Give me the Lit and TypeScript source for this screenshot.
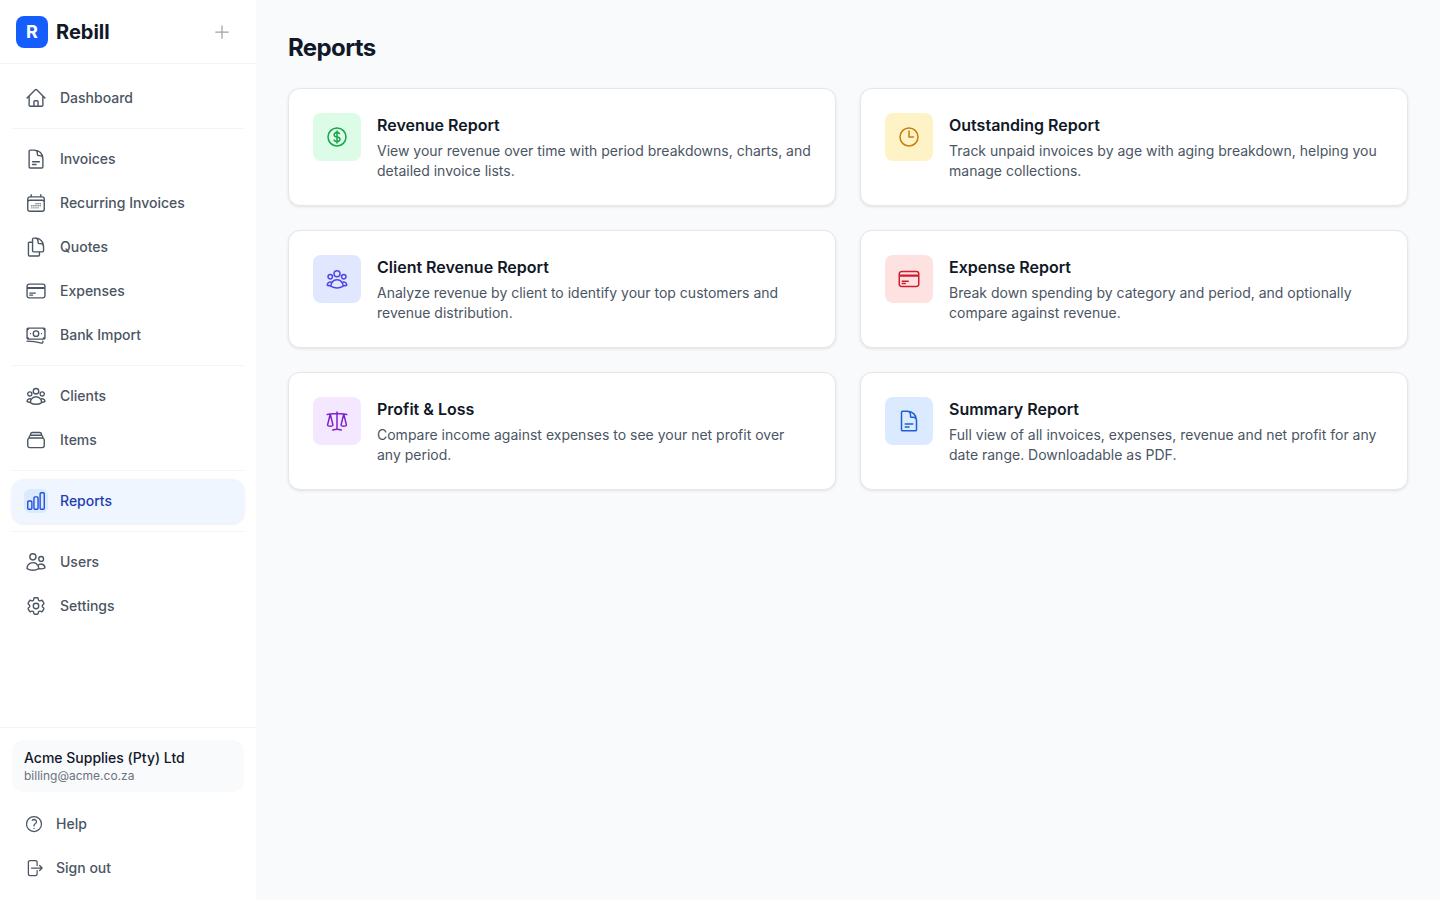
import { LitElement, html, css, svg } from 'lit';
import { customElement } from 'lit/decorators.js';

const ICONS: Record<string, string> = {
  home: 'M2.25 12l8.954-8.955c.44-.439 1.152-.439 1.591 0L21.75 12M4.5 9.75v10.125c0 .621.504 1.125 1.125 1.125H9.75v-4.875c0-.621.504-1.125 1.125-1.125h2.25c.621 0 1.125.504 1.125 1.125V21h4.125c.621 0 1.125-.504 1.125-1.125V9.75M8.25 21h8.25',
  doc: 'M19.5 14.25v-2.625a3.375 3.375 0 00-3.375-3.375h-1.5A1.125 1.125 0 0113.5 7.125v-1.5a3.375 3.375 0 00-3.375-3.375H8.25m0 12.75h7.5m-7.5 3H12M10.5 2.25H5.625c-.621 0-1.125.504-1.125 1.125v17.25c0 .621.504 1.125 1.125 1.125h12.75c.621 0 1.125-.504 1.125-1.125V11.25a9 9 0 00-9-9z',
  calendar: 'M6.75 3v2.25M17.25 3v2.25M3 18.75V7.5a2.25 2.25 0 012.25-2.25h13.5A2.25 2.25 0 0121 7.5v11.25m-18 0A2.25 2.25 0 005.25 21h13.5A2.25 2.25 0 0021 18.75m-18 0v-7.5A2.25 2.25 0 015.25 9h13.5A2.25 2.25 0 0121 11.25v7.5m-9-6h.008v.008H12v-.008zM12 15h.008v.008H12V15zm0 2.25h.008v.008H12v-.008zM9.75 15h.008v.008H9.75V15zm0 2.25h.008v.008H9.75v-.008zM7.5 15h.008v.008H7.5V15zm0 2.25h.008v.008H7.5v-.008zm6.75-4.5h.008v.008h-.008v-.008zm0 2.25h.008v.008h-.008V15zm0 2.25h.008v.008h-.008v-.008zm2.25-4.5h.008v.008H16.5v-.008zm0 2.25h.008v.008H16.5V15z',
  copies: 'M15.75 17.25v3.375c0 .621-.504 1.125-1.125 1.125h-9.75a1.125 1.125 0 01-1.125-1.125V7.875c0-.621.504-1.125 1.125-1.125H6.75a9.06 9.06 0 011.5.124m7.5 10.376h3.375c.621 0 1.125-.504 1.125-1.125V11.25c0-4.46-3.243-8.161-7.5-8.876a9.06 9.06 0 00-1.5-.124H9.375c-.621 0-1.125.504-1.125 1.125v3.5m7.5 10.375H9.375a1.125 1.125 0 01-1.125-1.125v-9.25m12 6.625v-1.875a3.375 3.375 0 00-3.375-3.375h-1.5a1.125 1.125 0 01-1.125-1.125v-1.5a3.375 3.375 0 00-3.375-3.375H9.75',
  card: 'M2.25 8.25h19.5M2.25 9h19.5m-16.5 5.25h6m-6 2.25h3m-3.75 3h15a2.25 2.25 0 002.25-2.25V6.75A2.25 2.25 0 0019.5 4.5h-15a2.25 2.25 0 00-2.25 2.25v10.5A2.25 2.25 0 004.5 19.5z',
  notes: 'M2.25 18.75a60.07 60.07 0 0115.797 2.101c.727.198 1.453-.342 1.453-1.096V18.75M3.75 4.5v.75A.75.75 0 013 6h-.75m0 0v-.375c0-.621.504-1.125 1.125-1.125H20.25M2.25 6v9m18-10.5v.75c0 .414.336.75.75.75h.75m-1.5-1.5h.375c.621 0 1.125.504 1.125 1.125v9.75c0 .621-.504 1.125-1.125 1.125h-.375m1.5-1.5H21a.75.75 0 00-.75.75v.75m0 0H3.75m0 0h-.375a1.125 1.125 0 01-1.125-1.125V15m1.5 1.5v-.75A.75.75 0 003 15h-.75M15 10.5a3 3 0 11-6 0 3 3 0 016 0zm3 0h.008v.008H18V10.5zm-12 0h.008v.008H6V10.5z',
  group: 'M18 18.72a9.094 9.094 0 003.741-.479 3 3 0 00-4.682-2.72m.94 3.198l.001.031c0 .225-.012.447-.037.666A11.944 11.944 0 0112 21c-2.17 0-4.207-.576-5.963-1.584A6.062 6.062 0 016 18.719m12 0a5.971 5.971 0 00-.941-3.197m0 0A5.995 5.995 0 0012 12.75a5.995 5.995 0 00-5.058 2.772m0 0a3 3 0 00-4.681 2.72 8.986 8.986 0 003.74.477m.94-3.197a5.971 5.971 0 00-.94 3.197M15 6.75a3 3 0 11-6 0 3 3 0 016 0zm6 3a2.25 2.25 0 11-4.5 0 2.25 2.25 0 014.5 0zm-13.5 0a2.25 2.25 0 11-4.5 0 2.25 2.25 0 014.5 0z',
  stack: 'M6 6.878V6a2.25 2.25 0 012.25-2.25h7.5A2.25 2.25 0 0118 6v.878m-12 0c.235-.083.487-.128.75-.128h10.5c.263 0 .515.045.75.128m-12 0A2.25 2.25 0 004.5 9v.878m13.5-3A2.25 2.25 0 0119.5 9v.878m0 0a2.246 2.246 0 00-.75-.128H5.25c-.263 0-.515.045-.75.128m15 0A2.25 2.25 0 0121 12v6a2.25 2.25 0 01-2.25 2.25H5.25A2.25 2.25 0 013 18v-6c0-.98.626-1.813 1.5-2.122',
  chart: 'M3 13.125C3 12.504 3.504 12 4.125 12h2.25c.621 0 1.125.504 1.125 1.125v6.75C7.5 20.496 6.996 21 6.375 21h-2.25A1.125 1.125 0 013 19.875v-6.75zM9.75 8.625c0-.621.504-1.125 1.125-1.125h2.25c.621 0 1.125.504 1.125 1.125v11.25c0 .621-.504 1.125-1.125 1.125h-2.25a1.125 1.125 0 01-1.125-1.125V8.625zM16.5 4.125c0-.621.504-1.125 1.125-1.125h2.25C20.496 3 21 3.504 21 4.125v15.75c0 .621-.504 1.125-1.125 1.125h-2.25a1.125 1.125 0 01-1.125-1.125V4.125z',
  users: 'M15 19.128a9.38 9.38 0 002.625.372 9.337 9.337 0 004.121-.952 4.125 4.125 0 00-7.533-2.493M15 19.128v-.003c0-1.113-.285-2.16-.786-3.07M15 19.128v.106A12.318 12.318 0 018.624 21c-2.331 0-4.512-.645-6.374-1.766l-.001-.109a6.375 6.375 0 0111.964-3.07M12 6.375a3.375 3.375 0 11-6.75 0 3.375 3.375 0 016.75 0zm8.25 2.25a2.625 2.625 0 11-5.25 0 2.625 2.625 0 015.25 0z',
  cog: 'M9.594 3.94c.09-.542.56-.94 1.11-.94h2.593c.55 0 1.02.398 1.11.94l.213 1.281c.063.374.313.686.645.87.074.04.147.083.22.127.324.196.72.257 1.075.124l1.217-.456a1.125 1.125 0 011.37.49l1.296 2.247a1.125 1.125 0 01-.26 1.431l-1.003.827c-.293.24-.438.613-.431.992a6.759 6.759 0 010 .255c-.007.378.138.75.43.99l1.005.828c.424.35.534.954.26 1.43l-1.298 2.247a1.125 1.125 0 01-1.369.491l-1.217-.456c-.355-.133-.75-.072-1.076.124a6.57 6.57 0 01-.22.128c-.331.183-.581.495-.644.869l-.213 1.28c-.09.543-.56.941-1.11.941h-2.594c-.55 0-1.02-.398-1.11-.94l-.213-1.281c-.062-.374-.312-.686-.644-.87a6.52 6.52 0 01-.22-.127c-.325-.196-.72-.257-1.076-.124l-1.217.456a1.125 1.125 0 01-1.369-.49l-1.297-2.247a1.125 1.125 0 01.26-1.431l1.004-.827c.292-.24.437-.613.43-.992a6.932 6.932 0 010-.255c.007-.378-.138-.75-.43-.99l-1.004-.828a1.125 1.125 0 01-.26-1.43l1.297-2.247a1.125 1.125 0 011.37-.491l1.216.456c.356.133.751.072 1.076-.124.072-.044.146-.087.22-.128.332-.183.582-.495.644-.869l.214-1.281zM15 12a3 3 0 11-6 0 3 3 0 016 0z',
  help: 'M9.879 7.519c1.171-1.025 3.071-1.025 4.242 0 1.172 1.025 1.172 2.687 0 3.712-.203.179-.43.326-.67.442-.745.361-1.45.999-1.45 1.827v.75M21 12a9 9 0 11-18 0 9 9 0 0118 0zm-9 5.25h.008v.008H12v-.008z',
  signout: 'M15.75 9V5.25A2.25 2.25 0 0013.5 3h-6a2.25 2.25 0 00-2.25 2.25v13.5A2.25 2.25 0 007.5 21h6a2.25 2.25 0 002.25-2.25V15m3 0l3-3m0 0l-3-3m3 3H9',
  dollar: 'M12 6v12m-3-2.818l.879.659c1.171.879 3.07.879 4.242 0 1.172-.879 1.172-2.303 0-3.182C13.536 12.219 12.768 12 12 12c-.725 0-1.45-.22-2.003-.659-1.106-.879-1.106-2.303 0-3.182s2.9-.879 4.006 0l.415.33M21 12a9 9 0 11-18 0 9 9 0 0118 0z',
  clock: 'M12 6v6h4.5m4.5 0a9 9 0 11-18 0 9 9 0 0118 0z',
  scale: 'M12 3v17.25m0 0c-1.472 0-2.882.265-4.185.75M12 20.25c1.472 0 2.882.265 4.185.75M18.75 4.97A48.416 48.416 0 0012 4.5c-2.291 0-4.545.16-6.75.47m13.5 0c1.01.143 2.01.317 3 .52m-3-.52l2.62 10.726c.122.499-.106 1.028-.589 1.202a5.988 5.988 0 01-2.031.352 5.988 5.988 0 01-2.031-.352c-.483-.174-.711-.703-.59-1.202L18.75 4.971zm-16.5.52c.99-.203 1.99-.377 3-.52m0 0l2.62 10.726c.122.499-.106 1.028-.589 1.202a5.989 5.989 0 01-2.031.352 5.989 5.989 0 01-2.031-.352c-.483-.174-.711-.703-.59-1.202L5.25 4.971z',
  plus: 'M12 4.5v15m7.5-7.5h-15',
};

const icon = (name: string) => html`<svg viewBox="0 0 24 24" fill="none" stroke="currentColor" stroke-width="1.5" stroke-linecap="round" stroke-linejoin="round">${svg`<path d=${ICONS[name]}></path>`}</svg>`;

const NAV = [
  [{ label: 'Dashboard', icon: 'home' }],
  [
    { label: 'Invoices', icon: 'doc' },
    { label: 'Recurring Invoices', icon: 'calendar' },
    { label: 'Quotes', icon: 'copies' },
    { label: 'Expenses', icon: 'card' },
    { label: 'Bank Import', icon: 'notes' },
  ],
  [
    { label: 'Clients', icon: 'group' },
    { label: 'Items', icon: 'stack' },
  ],
  [{ label: 'Reports', icon: 'chart', active: true }],
  [
    { label: 'Users', icon: 'users' },
    { label: 'Settings', icon: 'cog' },
  ],
];

const REPORTS = [
  { title: 'Revenue Report', desc: 'View your revenue over time with period breakdowns, charts, and detailed invoice lists.', icon: 'dollar', tone: 'green' },
  { title: 'Outstanding Report', desc: 'Track unpaid invoices by age with aging breakdown, helping you manage collections.', icon: 'clock', tone: 'amber' },
  { title: 'Client Revenue Report', desc: 'Analyze revenue by client to identify your top customers and revenue distribution.', icon: 'group', tone: 'indigo' },
  { title: 'Expense Report', desc: 'Break down spending by category and period, and optionally compare against revenue.', icon: 'card', tone: 'red' },
  { title: 'Profit & Loss', desc: 'Compare income against expenses to see your net profit over any period.', icon: 'scale', tone: 'purple' },
  { title: 'Summary Report', desc: 'Full view of all invoices, expenses, revenue and net profit for any date range. Downloadable as PDF.', icon: 'doc', tone: 'blue' },
];

@customElement('app-root')
export class AppRoot extends LitElement {
  static styles = css`
    :host {
      display: grid;
      grid-template-columns: 256px 1fr;
      height: 100vh;
      font-family: Inter, 'Liberation Sans', sans-serif;
      background: #f9fafb;
      color: #111827;
    }

    svg { display: block; }

    .sidebar {
      display: flex;
      flex-direction: column;
      background: #fff;
      height: 100vh;
    }

    .brand {
      display: flex;
      align-items: center;
      gap: 8px;
      height: 64px;
      box-sizing: border-box;
      padding: 0 24px 0 16px;
      border-bottom: 1px solid #f3f4f6;
    }
    .logo {
      width: 32px;
      height: 32px;
      border-radius: 8px;
      background: #155dfc;
      color: #fff;
      display: flex;
      align-items: center;
      justify-content: center;
      font-size: 18px;
      font-weight: 700;
    }
    .brand-name { flex: 1; font-size: 20px; line-height: 28px; font-weight: 700; }
    .plus { width: 20px; height: 20px; color: #9ca3af; }

    nav { flex: 1; padding: 12px; }
    .divider { height: 1px; background: #f3f4f6; margin: 8px 0; }

    .item {
      display: flex;
      align-items: center;
      gap: 12px;
      height: 44px;
      padding: 0 12px;
      border-radius: 12px;
      font-size: 14px;
      line-height: 20px;
      font-weight: 500;
      color: #4b5563;
    }
    .item .glyph {
      width: 24px;
      height: 24px;
      border-radius: 6px;
      display: flex;
      align-items: center;
      justify-content: center;
      color: #4b5563;
    }
    .item .glyph svg { width: 22px; height: 22px; }
    .item.active {
      background: #eff6ff;
      color: #1e40af;
      box-shadow: 0 1px 3px rgba(0, 0, 0, 0.1);
    }
    .item.active .glyph { background: #dbeafe; color: #1d4ed8; }

    .foot { padding: 12px 12px 10px; border-top: 1px solid #f3f4f6; }
    .account {
      padding: 8px 12px;
      border-radius: 12px;
      background: #f9fafb;
      margin-bottom: 10px;
    }
    .account-name { font-size: 14px; line-height: 20px; font-weight: 500; color: #111827; }
    .account-mail { font-size: 12px; line-height: 16px; color: #6b7280; }
    .foot .item .glyph { width: 20px; height: 20px; }
    .foot .item .glyph svg { width: 20px; height: 20px; }

    main { padding: 32px; overflow: hidden; }
    h1 { margin: 0 0 24px; font-size: 24px; line-height: 32px; font-weight: 700; letter-spacing: -0.025em; color: #111827; }

    .grid { display: grid; grid-template-columns: 1fr 1fr; gap: 24px; }
    .card {
      display: flex;
      gap: 16px;
      padding: 24px;
      background: #fff;
      border: 1px solid #e5e7eb;
      border-radius: 12px;
      box-shadow: 0 1px 3px rgba(0, 0, 0, 0.1);
    }
    .badge {
      flex: none;
      width: 48px;
      height: 48px;
      border-radius: 8px;
      display: flex;
      align-items: center;
      justify-content: center;
    }
    .badge svg { width: 24px; height: 24px; }
    .green { background: #dcfce7; color: #16a34a; }
    .amber { background: #fef3c7; color: #c77d0a; }
    .indigo { background: #e0e7ff; color: #4f46e5; }
    .red { background: #fee2e2; color: #d01c2c; }
    .purple { background: #f3e8ff; color: #7e22ce; }
    .blue { background: #dbeafe; color: #1d5fd8; }
    .card-title { font-size: 16px; line-height: 24px; font-weight: 600; color: #111827; }
    .card-desc { margin-top: 4px; font-size: 14px; line-height: 20px; color: #4b5563; }
  `;

  render() {
    return html`
      <aside class="sidebar">
        <div class="brand">
          <div class="logo">R</div>
          <div class="brand-name">Rebill</div>
          <div class="plus">${icon('plus')}</div>
        </div>
        <nav>
          ${NAV.map((group, i) => html`
            ${i > 0 ? html`<div class="divider"></div>` : ''}
            ${group.map((it: any) => html`
              <div class="item ${it.active ? 'active' : ''}">
                <span class="glyph">${icon(it.icon)}</span><span>${it.label}</span>
              </div>
            `)}
          `)}
        </nav>
        <div class="foot">
          <div class="account">
            <div class="account-name">Acme Supplies (Pty) Ltd</div>
            <div class="account-mail">billing@acme.co.za</div>
          </div>
          <div class="item"><span class="glyph">${icon('help')}</span><span>Help</span></div>
          <div class="item"><span class="glyph">${icon('signout')}</span><span>Sign out</span></div>
        </div>
      </aside>
      <main>
        <h1>Reports</h1>
        <div class="grid">
          ${REPORTS.map((r) => html`
            <div class="card">
              <div class="badge ${r.tone}">${icon(r.icon)}</div>
              <div>
                <div class="card-title">${r.title}</div>
                <div class="card-desc">${r.desc}</div>
              </div>
            </div>
          `)}
        </div>
      </main>
    `;
  }
}

declare global {
  interface HTMLElementTagNameMap { 'app-root': AppRoot; }
}
